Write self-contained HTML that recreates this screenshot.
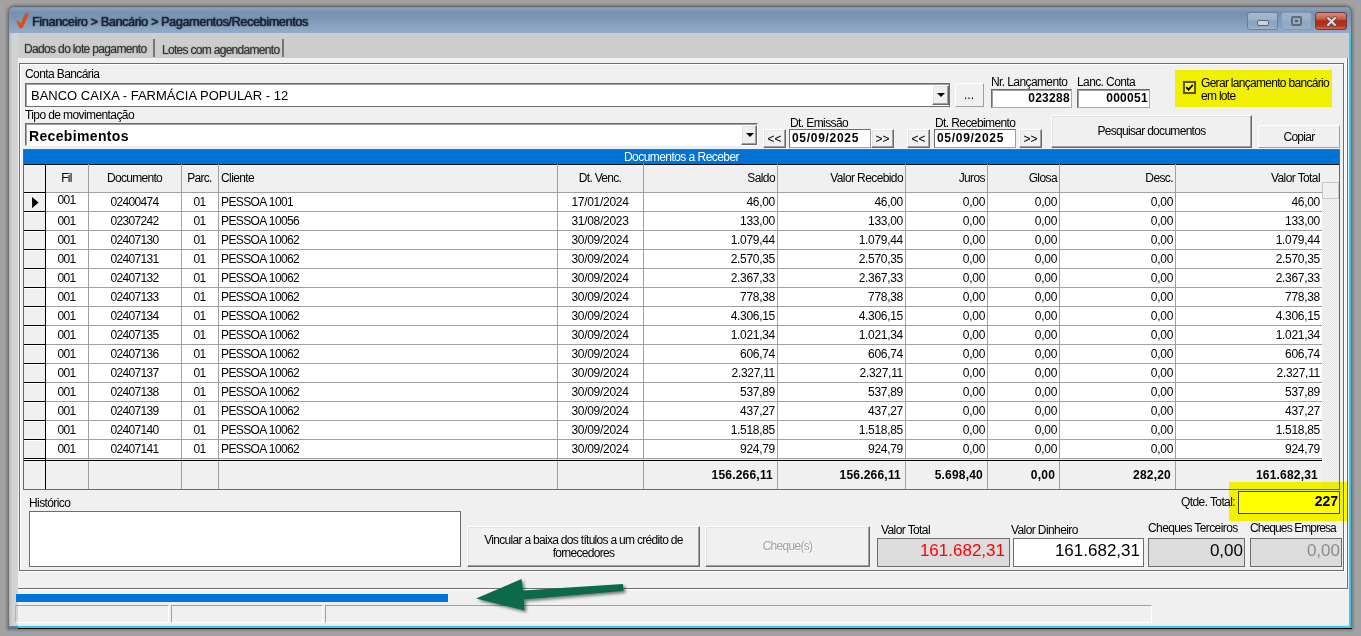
<!DOCTYPE html><html><head><meta charset="utf-8"><style>
*{margin:0;padding:0;box-sizing:border-box}
html,body{width:1361px;height:636px;overflow:hidden;background:#a2a2a2;font-family:"Liberation Sans",sans-serif;font-size:12px;color:#000}
.a{position:absolute}
.t{position:absolute;white-space:nowrap;line-height:14px;letter-spacing:-0.6px}
.c{position:absolute;white-space:nowrap;line-height:14px;letter-spacing:-0.7px;text-align:center}
.r{position:absolute;white-space:nowrap;line-height:14px;letter-spacing:-0.6px;text-align:right}
.b{font-weight:bold}
.sunk{position:absolute;background:#fff;border:1px solid;border-color:#6d6d6d #a9a9a9 #a9a9a9 #6d6d6d;box-shadow:inset 1px 1px 0 #a0a0a0}
.btn{position:absolute;background:#f0f0f0;border:1px solid;border-color:#fff #696969 #696969 #fff;box-shadow:inset -1px -1px 0 #a0a0a0, inset 1px 1px 0 #e3e3e3}
.vl{position:absolute;width:1px;background:#a0a0a0}
.hl{position:absolute;height:1px;background:#a0a0a0}
</style></head><body>
<div class="a" style="left:8px;top:6px;width:1344px;height:623px;border-radius:7px 7px 0 0;background:#707070;box-shadow:0 0 3px 1px rgba(50,50,50,0.45)"></div>
<div class="a" style="left:9px;top:7px;width:1342px;height:621px;border-radius:6px 6px 0 0;background:linear-gradient(90deg,#aab6c2 0,#c3cad1 2px,#d3d3d3 4px,#d3d3d3 1339px,#e6eef2 1339px,#e6eef2 1340px,#40c6ee 1340px,#40c6ee 1342px)"></div>
<div class="a" style="left:9px;top:7px;width:1342px;height:26px;border-radius:6px 6px 0 0;background:linear-gradient(180deg,#7890ad 0,#869fbb 2px,#7690af 5px,#7b96b5 11px,#8aa5c2 20px,#91abc7 26px)"></div>
<svg class="a" style="left:0;top:0" width="40" height="40" viewBox="0 0 40 40"><defs><filter id="ib" x="-50%" y="-50%" width="200%" height="200%"><feGaussianBlur stdDeviation="0.7"/></filter></defs><g filter="url(#ib)"><path d="M16.4 21.0 L17.6 20.6 L20.8 23.6 L25.0 13.6 Q26.9 12.1 29.0 13.9 L22.8 27.6 Q21.0 29.4 19.2 28.0 Z" fill="#d8501f"/><path d="M13.8 17.9 L14.8 17.5 L18.2 21.2 L17.2 23.0 Z" fill="#c87060" opacity="0.55"/></g></svg>
<div class="t" style="left:32px;top:14.5px;font-size:12.6px;letter-spacing:-0.34px;color:#1c2430;text-shadow:0 0 1px rgba(20,30,45,.9),0.5px 0 1px rgba(20,30,45,.6),0 0 2px rgba(40,55,75,.5)">Financeiro &gt; Bancário &gt; Pagamentos/Recebimentos</div>
<div class="a" style="left:1247px;top:12px;width:31px;height:18px;border:1px solid #6580a2;border-radius:3px;background:linear-gradient(180deg,#a6bad0 0,#9cb2ca 40%,#8aa3c0 50%,#8fa8c4 85%,#a2b8cf 100%);filter:blur(0.3px)"><div class="a" style="left:9px;top:7px;width:12px;height:6px;background:#cfd3d8;border:1px solid #55677d;border-radius:2px"></div></div>
<div class="a" style="left:1281px;top:12px;width:31px;height:18px;border:1px solid #849bb7;border-radius:3px;background:linear-gradient(180deg,#9fb4cb 0,#98aec7 45%,#8ea7c2 55%,#97aec7 100%);filter:blur(0.3px)"><div class="a" style="left:9px;top:3px;width:11px;height:10px;border:2px solid #5d6d80;background:#9aa8b8;border-radius:2px"><div class="a" style="left:2px;top:2px;width:3px;height:2px;background:#4d5b6b"></div></div></div>
<div class="a" style="left:1315px;top:12px;width:32px;height:18px;border:1px solid #6e3a3a;border-radius:3px;background:linear-gradient(180deg,#d88a7c 0,#c8604c 35%,#ad2a14 50%,#b7341c 80%,#cf6a58 100%);filter:blur(0.3px)"><svg class="a" style="left:10px;top:3px" width="11" height="11" viewBox="0 0 11 11"><path d="M2 2 L9 9 M9 2 L2 9" stroke="#5a4a4a" stroke-width="3.4" stroke-linecap="round"/><path d="M2 2 L9 9 M9 2 L2 9" stroke="#dcdcdc" stroke-width="2" stroke-linecap="round"/></svg></div>
<div class="a" style="left:18px;top:33px;width:1331px;height:25px;background:#cdcdcd"></div>
<div class="t" style="left:24px;top:42px;color:#333;letter-spacing:-0.65px;font-size:12px;text-shadow:0 0 1px rgba(0,0,0,.35),0 0 2px rgba(0,0,0,.2)">Dados do lote pagamento</div>
<div class="a" style="left:153px;top:39px;width:2px;height:18px;background:#767676;filter:blur(0.4px)"></div>
<div class="t" style="left:162px;top:43px;color:#333;letter-spacing:-0.7px;font-size:12px;text-shadow:0 0 1px rgba(0,0,0,.35),0 0 2px rgba(0,0,0,.2)">Lotes com agendamento</div>
<div class="a" style="left:282px;top:39px;width:2px;height:18px;background:#767676;filter:blur(0.4px)"></div>
<div class="a" style="left:18px;top:58px;width:1329px;height:531px;background:#f0f0f0"></div>
<div class="a" style="left:19px;top:63px;width:1325px;height:508px;border:1px solid;border-color:#6d6d6d #6d6d6d #6d6d6d #6d6d6d;box-shadow:inset 1px 1px 0 #fff, 1px 1px 0 #fff"></div>
<div class="t" style="left:25px;top:67px;">Conta Bancária</div>
<div class="sunk" style="left:25px;top:83px;width:925px;height:24px;border-color:#6d6d6d;box-shadow:inset 1px 1px 0 #a0a0a0"></div>
<div class="t" style="left:31px;top:88px;font-size:13px;letter-spacing:0;line-height:16px">BANCO CAIXA - FARMÁCIA POPULAR - 12</div>
<div class="btn" style="left:932px;top:85px;width:17px;height:20px"><div class="a" style="left:4px;top:7px;width:0;height:0;border-left:4px solid transparent;border-right:4px solid transparent;border-top:4px solid #000"></div></div>
<div class="btn" style="left:955px;top:83px;width:29px;height:24px;border-color:#fff #a0a0a0 #a0a0a0 #fff;box-shadow:none"><div class="t" style="left:8px;top:4px;letter-spacing:0">...</div></div>
<div class="t" style="left:991px;top:75px;">Nr. Lançamento</div>
<div class="sunk" style="left:991px;top:89px;width:81px;height:19px"></div>
<div class="r b" style="left:991px;top:91px;width:79px;font-size:12px;letter-spacing:0.3px">023288</div>
<div class="t" style="left:1077px;top:75px;">Lanc. Conta</div>
<div class="sunk" style="left:1077px;top:89px;width:73px;height:19px"></div>
<div class="r b" style="left:1077px;top:91px;width:71px;font-size:12px;letter-spacing:0.3px">000051</div>
<div class="a" style="left:1183px;top:81px;width:13px;height:13px;border:2px solid #5a5a5a;background:#fff;box-shadow:0 0 0 1px #e8e8e8"><svg class="a" style="left:0;top:0" width="9" height="9" viewBox="0 0 9 9"><path d="M1.2 4.2 L3.5 6.6 L7.8 1.8" fill="none" stroke="#000" stroke-width="1.8"/></svg></div>
<div class="t" style="left:1201px;top:77px;line-height:13px;letter-spacing:-0.7px">Gerar lançamento bancário<br>em lote</div>
<div class="t" style="left:25px;top:108px;">Tipo de movimentação</div>
<div class="sunk" style="left:25px;top:123px;width:733px;height:23px;border-color:#6d6d6d #fff #fff #6d6d6d;box-shadow:inset 1px 1px 0 #a0a0a0"></div>
<div class="t b" style="left:29px;top:128px;font-size:14px;letter-spacing:0.35px;line-height:16px">Recebimentos</div>
<div class="btn" style="left:741px;top:125px;width:16px;height:20px"><div class="a" style="left:4px;top:7px;width:0;height:0;border-left:4px solid transparent;border-right:4px solid transparent;border-top:4px solid #000"></div></div>
<div class="t" style="left:790px;top:116px;">Dt. Emissão</div><div class="btn" style="left:763px;top:129px;width:23px;height:19px"><div class="c" style="left:0;top:2px;width:21px;letter-spacing:0">&lt;&lt;</div></div><div class="sunk" style="left:789px;top:129px;width:82px;height:19px;box-shadow:none;border-color:#6d6d6d #a0a0a0 #a0a0a0 #6d6d6d"></div><div class="t b" style="left:792px;top:131px;letter-spacing:0.7px">05/09/2025</div><div class="btn" style="left:871px;top:129px;width:23px;height:19px"><div class="c" style="left:0;top:2px;width:21px;letter-spacing:0">&gt;&gt;</div></div>
<div class="t" style="left:935px;top:116px;">Dt. Recebimento</div><div class="btn" style="left:907px;top:129px;width:23px;height:19px"><div class="c" style="left:0;top:2px;width:21px;letter-spacing:0">&lt;&lt;</div></div><div class="sunk" style="left:934px;top:129px;width:82px;height:19px;box-shadow:none;border-color:#6d6d6d #a0a0a0 #a0a0a0 #6d6d6d"></div><div class="t b" style="left:937px;top:131px;letter-spacing:0.7px">05/09/2025</div><div class="btn" style="left:1019px;top:129px;width:23px;height:19px"><div class="c" style="left:0;top:2px;width:21px;letter-spacing:0">&gt;&gt;</div></div>
<div class="btn" style="left:1051px;top:115px;width:201px;height:33px"><div class="c" style="left:0;top:8px;width:199px">Pesquisar documentos</div></div>
<div class="btn" style="left:1258px;top:125px;width:82px;height:23px;border-color:#fff #a0a0a0 #a0a0a0 #fff;box-shadow:none"><div class="c" style="left:0;top:4px;width:80px">Copiar</div></div>
<div class="a" style="left:23px;top:149px;width:1317px;height:341px;background:#f0f0f0;border:1px solid #696969"></div>
<div class="a" style="left:24px;top:150px;width:1315px;height:15px;background:#0073d5;border-bottom:1px solid #101010"></div>
<div class="c" style="left:24px;top:151px;width:1315px;color:#fff;line-height:13px;letter-spacing:-0.55px">Documentos a Receber</div>
<div class="a" style="left:45px;top:192px;width:1277px;height:266px;background:#fff"></div>
<div class="a" style="left:1322px;top:198px;width:17px;height:291px;background:repeating-conic-gradient(#f4f4f4 0 25%, #e6e6e6 0 50%) 0 0/2px 2px"></div>
<div class="a" style="left:1322px;top:182px;width:17px;height:17px;background:#f0f0f0;border:1px solid #c8c8c8"></div>
<div class="vl" style="left:45px;top:164px;height:325px;background:#000"></div>
<div class="vl" style="left:88px;top:164px;height:325px"></div>
<div class="vl" style="left:181px;top:164px;height:325px"></div>
<div class="vl" style="left:218px;top:164px;height:325px"></div>
<div class="vl" style="left:557px;top:164px;height:325px"></div>
<div class="vl" style="left:643px;top:164px;height:325px"></div>
<div class="vl" style="left:777px;top:164px;height:325px"></div>
<div class="vl" style="left:905px;top:164px;height:325px"></div>
<div class="vl" style="left:987px;top:164px;height:325px"></div>
<div class="vl" style="left:1059px;top:164px;height:325px"></div>
<div class="vl" style="left:1175px;top:164px;height:325px"></div>
<div class="hl" style="left:46px;top:192px;width:1276px"></div>
<div class="a" style="left:24px;top:192px;width:21px;height:1px;background:#000"></div>
<div class="a" style="left:24px;top:193px;width:21px;height:1px;background:#fff"></div>
<div class="hl" style="left:46px;top:211px;width:1276px"></div>
<div class="a" style="left:24px;top:211px;width:21px;height:1px;background:#000"></div>
<div class="a" style="left:24px;top:212px;width:21px;height:1px;background:#fff"></div>
<div class="hl" style="left:46px;top:230px;width:1276px"></div>
<div class="a" style="left:24px;top:230px;width:21px;height:1px;background:#000"></div>
<div class="a" style="left:24px;top:231px;width:21px;height:1px;background:#fff"></div>
<div class="hl" style="left:46px;top:249px;width:1276px"></div>
<div class="a" style="left:24px;top:249px;width:21px;height:1px;background:#000"></div>
<div class="a" style="left:24px;top:250px;width:21px;height:1px;background:#fff"></div>
<div class="hl" style="left:46px;top:268px;width:1276px"></div>
<div class="a" style="left:24px;top:268px;width:21px;height:1px;background:#000"></div>
<div class="a" style="left:24px;top:269px;width:21px;height:1px;background:#fff"></div>
<div class="hl" style="left:46px;top:287px;width:1276px"></div>
<div class="a" style="left:24px;top:287px;width:21px;height:1px;background:#000"></div>
<div class="a" style="left:24px;top:288px;width:21px;height:1px;background:#fff"></div>
<div class="hl" style="left:46px;top:306px;width:1276px"></div>
<div class="a" style="left:24px;top:306px;width:21px;height:1px;background:#000"></div>
<div class="a" style="left:24px;top:307px;width:21px;height:1px;background:#fff"></div>
<div class="hl" style="left:46px;top:325px;width:1276px"></div>
<div class="a" style="left:24px;top:325px;width:21px;height:1px;background:#000"></div>
<div class="a" style="left:24px;top:326px;width:21px;height:1px;background:#fff"></div>
<div class="hl" style="left:46px;top:344px;width:1276px"></div>
<div class="a" style="left:24px;top:344px;width:21px;height:1px;background:#000"></div>
<div class="a" style="left:24px;top:345px;width:21px;height:1px;background:#fff"></div>
<div class="hl" style="left:46px;top:363px;width:1276px"></div>
<div class="a" style="left:24px;top:363px;width:21px;height:1px;background:#000"></div>
<div class="a" style="left:24px;top:364px;width:21px;height:1px;background:#fff"></div>
<div class="hl" style="left:46px;top:382px;width:1276px"></div>
<div class="a" style="left:24px;top:382px;width:21px;height:1px;background:#000"></div>
<div class="a" style="left:24px;top:383px;width:21px;height:1px;background:#fff"></div>
<div class="hl" style="left:46px;top:401px;width:1276px"></div>
<div class="a" style="left:24px;top:401px;width:21px;height:1px;background:#000"></div>
<div class="a" style="left:24px;top:402px;width:21px;height:1px;background:#fff"></div>
<div class="hl" style="left:46px;top:420px;width:1276px"></div>
<div class="a" style="left:24px;top:420px;width:21px;height:1px;background:#000"></div>
<div class="a" style="left:24px;top:421px;width:21px;height:1px;background:#fff"></div>
<div class="hl" style="left:46px;top:439px;width:1276px"></div>
<div class="a" style="left:24px;top:439px;width:21px;height:1px;background:#000"></div>
<div class="a" style="left:24px;top:440px;width:21px;height:1px;background:#fff"></div>
<div class="a" style="left:24px;top:458px;width:21px;height:1px;background:#000"></div>
<div class="a" style="left:24px;top:459px;width:21px;height:1px;background:#fff"></div>
<div class="a" style="left:24px;top:211px;width:21px;height:1px;background:#000"></div>
<div class="hl" style="left:46px;top:458px;width:1276px"></div>
<div class="a" style="left:24px;top:460px;width:1298px;height:1px;background:#000"></div>
<div class="c" style="left:45px;top:171px;width:43px">Fil</div>
<div class="c" style="left:88px;top:171px;width:93px">Documento</div>
<div class="c" style="left:181px;top:171px;width:37px">Parc.</div>
<div class="t" style="left:221px;top:171px;">Cliente</div>
<div class="c" style="left:557px;top:171px;width:86px">Dt. Venc.</div>
<div class="r" style="left:643px;top:171px;width:132px">Saldo</div>
<div class="r" style="left:777px;top:171px;width:126px">Valor Recebido</div>
<div class="r" style="left:905px;top:171px;width:80px">Juros</div>
<div class="r" style="left:987px;top:171px;width:70px">Glosa</div>
<div class="r" style="left:1059px;top:171px;width:114px">Desc.</div>
<div class="r" style="left:1175px;top:171px;width:145px">Valor Total</div>
<svg class="a" style="left:0;top:0" width="45" height="215"><path d="M32 197 L38.6 202.6 L32 208.2 Z" fill="#000"/></svg>
<div class="c" style="left:45px;top:193px;width:43px">001</div>
<div class="c" style="left:88px;top:195px;width:93px">02400474</div>
<div class="c" style="left:181px;top:195px;width:37px">01</div>
<div class="t" style="left:221px;top:195px;">PESSOA 1001</div>
<div class="c" style="left:557px;top:195px;width:86px;letter-spacing:-0.3px">17/01/2024</div>
<div class="r" style="left:643px;top:195px;width:132px;letter-spacing:-0.3px">46,00</div>
<div class="r" style="left:777px;top:195px;width:126px;letter-spacing:-0.3px">46,00</div>
<div class="r" style="left:905px;top:195px;width:80px;letter-spacing:-0.3px">0,00</div>
<div class="r" style="left:987px;top:195px;width:70px;letter-spacing:-0.3px">0,00</div>
<div class="r" style="left:1059px;top:195px;width:114px;letter-spacing:-0.3px">0,00</div>
<div class="r" style="left:1175px;top:195px;width:145px;letter-spacing:-0.3px">46,00</div>
<div class="c" style="left:45px;top:214px;width:43px">001</div>
<div class="c" style="left:88px;top:214px;width:93px">02307242</div>
<div class="c" style="left:181px;top:214px;width:37px">01</div>
<div class="t" style="left:221px;top:214px;">PESSOA 10056</div>
<div class="c" style="left:557px;top:214px;width:86px;letter-spacing:-0.3px">31/08/2023</div>
<div class="r" style="left:643px;top:214px;width:132px;letter-spacing:-0.3px">133,00</div>
<div class="r" style="left:777px;top:214px;width:126px;letter-spacing:-0.3px">133,00</div>
<div class="r" style="left:905px;top:214px;width:80px;letter-spacing:-0.3px">0,00</div>
<div class="r" style="left:987px;top:214px;width:70px;letter-spacing:-0.3px">0,00</div>
<div class="r" style="left:1059px;top:214px;width:114px;letter-spacing:-0.3px">0,00</div>
<div class="r" style="left:1175px;top:214px;width:145px;letter-spacing:-0.3px">133,00</div>
<div class="c" style="left:45px;top:233px;width:43px">001</div>
<div class="c" style="left:88px;top:233px;width:93px">02407130</div>
<div class="c" style="left:181px;top:233px;width:37px">01</div>
<div class="t" style="left:221px;top:233px;">PESSOA 10062</div>
<div class="c" style="left:557px;top:233px;width:86px;letter-spacing:-0.3px">30/09/2024</div>
<div class="r" style="left:643px;top:233px;width:132px;letter-spacing:-0.3px">1.079,44</div>
<div class="r" style="left:777px;top:233px;width:126px;letter-spacing:-0.3px">1.079,44</div>
<div class="r" style="left:905px;top:233px;width:80px;letter-spacing:-0.3px">0,00</div>
<div class="r" style="left:987px;top:233px;width:70px;letter-spacing:-0.3px">0,00</div>
<div class="r" style="left:1059px;top:233px;width:114px;letter-spacing:-0.3px">0,00</div>
<div class="r" style="left:1175px;top:233px;width:145px;letter-spacing:-0.3px">1.079,44</div>
<div class="c" style="left:45px;top:252px;width:43px">001</div>
<div class="c" style="left:88px;top:252px;width:93px">02407131</div>
<div class="c" style="left:181px;top:252px;width:37px">01</div>
<div class="t" style="left:221px;top:252px;">PESSOA 10062</div>
<div class="c" style="left:557px;top:252px;width:86px;letter-spacing:-0.3px">30/09/2024</div>
<div class="r" style="left:643px;top:252px;width:132px;letter-spacing:-0.3px">2.570,35</div>
<div class="r" style="left:777px;top:252px;width:126px;letter-spacing:-0.3px">2.570,35</div>
<div class="r" style="left:905px;top:252px;width:80px;letter-spacing:-0.3px">0,00</div>
<div class="r" style="left:987px;top:252px;width:70px;letter-spacing:-0.3px">0,00</div>
<div class="r" style="left:1059px;top:252px;width:114px;letter-spacing:-0.3px">0,00</div>
<div class="r" style="left:1175px;top:252px;width:145px;letter-spacing:-0.3px">2.570,35</div>
<div class="c" style="left:45px;top:271px;width:43px">001</div>
<div class="c" style="left:88px;top:271px;width:93px">02407132</div>
<div class="c" style="left:181px;top:271px;width:37px">01</div>
<div class="t" style="left:221px;top:271px;">PESSOA 10062</div>
<div class="c" style="left:557px;top:271px;width:86px;letter-spacing:-0.3px">30/09/2024</div>
<div class="r" style="left:643px;top:271px;width:132px;letter-spacing:-0.3px">2.367,33</div>
<div class="r" style="left:777px;top:271px;width:126px;letter-spacing:-0.3px">2.367,33</div>
<div class="r" style="left:905px;top:271px;width:80px;letter-spacing:-0.3px">0,00</div>
<div class="r" style="left:987px;top:271px;width:70px;letter-spacing:-0.3px">0,00</div>
<div class="r" style="left:1059px;top:271px;width:114px;letter-spacing:-0.3px">0,00</div>
<div class="r" style="left:1175px;top:271px;width:145px;letter-spacing:-0.3px">2.367,33</div>
<div class="c" style="left:45px;top:290px;width:43px">001</div>
<div class="c" style="left:88px;top:290px;width:93px">02407133</div>
<div class="c" style="left:181px;top:290px;width:37px">01</div>
<div class="t" style="left:221px;top:290px;">PESSOA 10062</div>
<div class="c" style="left:557px;top:290px;width:86px;letter-spacing:-0.3px">30/09/2024</div>
<div class="r" style="left:643px;top:290px;width:132px;letter-spacing:-0.3px">778,38</div>
<div class="r" style="left:777px;top:290px;width:126px;letter-spacing:-0.3px">778,38</div>
<div class="r" style="left:905px;top:290px;width:80px;letter-spacing:-0.3px">0,00</div>
<div class="r" style="left:987px;top:290px;width:70px;letter-spacing:-0.3px">0,00</div>
<div class="r" style="left:1059px;top:290px;width:114px;letter-spacing:-0.3px">0,00</div>
<div class="r" style="left:1175px;top:290px;width:145px;letter-spacing:-0.3px">778,38</div>
<div class="c" style="left:45px;top:309px;width:43px">001</div>
<div class="c" style="left:88px;top:309px;width:93px">02407134</div>
<div class="c" style="left:181px;top:309px;width:37px">01</div>
<div class="t" style="left:221px;top:309px;">PESSOA 10062</div>
<div class="c" style="left:557px;top:309px;width:86px;letter-spacing:-0.3px">30/09/2024</div>
<div class="r" style="left:643px;top:309px;width:132px;letter-spacing:-0.3px">4.306,15</div>
<div class="r" style="left:777px;top:309px;width:126px;letter-spacing:-0.3px">4.306,15</div>
<div class="r" style="left:905px;top:309px;width:80px;letter-spacing:-0.3px">0,00</div>
<div class="r" style="left:987px;top:309px;width:70px;letter-spacing:-0.3px">0,00</div>
<div class="r" style="left:1059px;top:309px;width:114px;letter-spacing:-0.3px">0,00</div>
<div class="r" style="left:1175px;top:309px;width:145px;letter-spacing:-0.3px">4.306,15</div>
<div class="c" style="left:45px;top:328px;width:43px">001</div>
<div class="c" style="left:88px;top:328px;width:93px">02407135</div>
<div class="c" style="left:181px;top:328px;width:37px">01</div>
<div class="t" style="left:221px;top:328px;">PESSOA 10062</div>
<div class="c" style="left:557px;top:328px;width:86px;letter-spacing:-0.3px">30/09/2024</div>
<div class="r" style="left:643px;top:328px;width:132px;letter-spacing:-0.3px">1.021,34</div>
<div class="r" style="left:777px;top:328px;width:126px;letter-spacing:-0.3px">1.021,34</div>
<div class="r" style="left:905px;top:328px;width:80px;letter-spacing:-0.3px">0,00</div>
<div class="r" style="left:987px;top:328px;width:70px;letter-spacing:-0.3px">0,00</div>
<div class="r" style="left:1059px;top:328px;width:114px;letter-spacing:-0.3px">0,00</div>
<div class="r" style="left:1175px;top:328px;width:145px;letter-spacing:-0.3px">1.021,34</div>
<div class="c" style="left:45px;top:347px;width:43px">001</div>
<div class="c" style="left:88px;top:347px;width:93px">02407136</div>
<div class="c" style="left:181px;top:347px;width:37px">01</div>
<div class="t" style="left:221px;top:347px;">PESSOA 10062</div>
<div class="c" style="left:557px;top:347px;width:86px;letter-spacing:-0.3px">30/09/2024</div>
<div class="r" style="left:643px;top:347px;width:132px;letter-spacing:-0.3px">606,74</div>
<div class="r" style="left:777px;top:347px;width:126px;letter-spacing:-0.3px">606,74</div>
<div class="r" style="left:905px;top:347px;width:80px;letter-spacing:-0.3px">0,00</div>
<div class="r" style="left:987px;top:347px;width:70px;letter-spacing:-0.3px">0,00</div>
<div class="r" style="left:1059px;top:347px;width:114px;letter-spacing:-0.3px">0,00</div>
<div class="r" style="left:1175px;top:347px;width:145px;letter-spacing:-0.3px">606,74</div>
<div class="c" style="left:45px;top:366px;width:43px">001</div>
<div class="c" style="left:88px;top:366px;width:93px">02407137</div>
<div class="c" style="left:181px;top:366px;width:37px">01</div>
<div class="t" style="left:221px;top:366px;">PESSOA 10062</div>
<div class="c" style="left:557px;top:366px;width:86px;letter-spacing:-0.3px">30/09/2024</div>
<div class="r" style="left:643px;top:366px;width:132px;letter-spacing:-0.3px">2.327,11</div>
<div class="r" style="left:777px;top:366px;width:126px;letter-spacing:-0.3px">2.327,11</div>
<div class="r" style="left:905px;top:366px;width:80px;letter-spacing:-0.3px">0,00</div>
<div class="r" style="left:987px;top:366px;width:70px;letter-spacing:-0.3px">0,00</div>
<div class="r" style="left:1059px;top:366px;width:114px;letter-spacing:-0.3px">0,00</div>
<div class="r" style="left:1175px;top:366px;width:145px;letter-spacing:-0.3px">2.327,11</div>
<div class="c" style="left:45px;top:385px;width:43px">001</div>
<div class="c" style="left:88px;top:385px;width:93px">02407138</div>
<div class="c" style="left:181px;top:385px;width:37px">01</div>
<div class="t" style="left:221px;top:385px;">PESSOA 10062</div>
<div class="c" style="left:557px;top:385px;width:86px;letter-spacing:-0.3px">30/09/2024</div>
<div class="r" style="left:643px;top:385px;width:132px;letter-spacing:-0.3px">537,89</div>
<div class="r" style="left:777px;top:385px;width:126px;letter-spacing:-0.3px">537,89</div>
<div class="r" style="left:905px;top:385px;width:80px;letter-spacing:-0.3px">0,00</div>
<div class="r" style="left:987px;top:385px;width:70px;letter-spacing:-0.3px">0,00</div>
<div class="r" style="left:1059px;top:385px;width:114px;letter-spacing:-0.3px">0,00</div>
<div class="r" style="left:1175px;top:385px;width:145px;letter-spacing:-0.3px">537,89</div>
<div class="c" style="left:45px;top:404px;width:43px">001</div>
<div class="c" style="left:88px;top:404px;width:93px">02407139</div>
<div class="c" style="left:181px;top:404px;width:37px">01</div>
<div class="t" style="left:221px;top:404px;">PESSOA 10062</div>
<div class="c" style="left:557px;top:404px;width:86px;letter-spacing:-0.3px">30/09/2024</div>
<div class="r" style="left:643px;top:404px;width:132px;letter-spacing:-0.3px">437,27</div>
<div class="r" style="left:777px;top:404px;width:126px;letter-spacing:-0.3px">437,27</div>
<div class="r" style="left:905px;top:404px;width:80px;letter-spacing:-0.3px">0,00</div>
<div class="r" style="left:987px;top:404px;width:70px;letter-spacing:-0.3px">0,00</div>
<div class="r" style="left:1059px;top:404px;width:114px;letter-spacing:-0.3px">0,00</div>
<div class="r" style="left:1175px;top:404px;width:145px;letter-spacing:-0.3px">437,27</div>
<div class="c" style="left:45px;top:423px;width:43px">001</div>
<div class="c" style="left:88px;top:423px;width:93px">02407140</div>
<div class="c" style="left:181px;top:423px;width:37px">01</div>
<div class="t" style="left:221px;top:423px;">PESSOA 10062</div>
<div class="c" style="left:557px;top:423px;width:86px;letter-spacing:-0.3px">30/09/2024</div>
<div class="r" style="left:643px;top:423px;width:132px;letter-spacing:-0.3px">1.518,85</div>
<div class="r" style="left:777px;top:423px;width:126px;letter-spacing:-0.3px">1.518,85</div>
<div class="r" style="left:905px;top:423px;width:80px;letter-spacing:-0.3px">0,00</div>
<div class="r" style="left:987px;top:423px;width:70px;letter-spacing:-0.3px">0,00</div>
<div class="r" style="left:1059px;top:423px;width:114px;letter-spacing:-0.3px">0,00</div>
<div class="r" style="left:1175px;top:423px;width:145px;letter-spacing:-0.3px">1.518,85</div>
<div class="c" style="left:45px;top:442px;width:43px">001</div>
<div class="c" style="left:88px;top:442px;width:93px">02407141</div>
<div class="c" style="left:181px;top:442px;width:37px">01</div>
<div class="t" style="left:221px;top:442px;">PESSOA 10062</div>
<div class="c" style="left:557px;top:442px;width:86px;letter-spacing:-0.3px">30/09/2024</div>
<div class="r" style="left:643px;top:442px;width:132px;letter-spacing:-0.3px">924,79</div>
<div class="r" style="left:777px;top:442px;width:126px;letter-spacing:-0.3px">924,79</div>
<div class="r" style="left:905px;top:442px;width:80px;letter-spacing:-0.3px">0,00</div>
<div class="r" style="left:987px;top:442px;width:70px;letter-spacing:-0.3px">0,00</div>
<div class="r" style="left:1059px;top:442px;width:114px;letter-spacing:-0.3px">0,00</div>
<div class="r" style="left:1175px;top:442px;width:145px;letter-spacing:-0.3px">924,79</div>
<div class="r b" style="left:643px;top:468px;width:130px;letter-spacing:0.2px">156.266,11</div>
<div class="r b" style="left:777px;top:468px;width:124px;letter-spacing:0.2px">156.266,11</div>
<div class="r b" style="left:905px;top:468px;width:78px;letter-spacing:0.2px">5.698,40</div>
<div class="r b" style="left:987px;top:468px;width:68px;letter-spacing:0.2px">0,00</div>
<div class="r b" style="left:1059px;top:468px;width:112px;letter-spacing:0.2px">282,20</div>
<div class="r b" style="left:1175px;top:468px;width:143px;letter-spacing:0.2px">161.682,31</div>
<div class="t" style="left:29px;top:496px;">Histórico</div>
<div class="a" style="left:29px;top:511px;width:432px;height:56px;background:#fff;border:1px solid #6d6d6d"></div>
<div class="btn" style="left:467px;top:526px;width:233px;height:41px"><div class="c" style="left:0;top:7px;width:231px;line-height:12.5px">Vincular a baixa dos títulos a um crédito de<br>fornecedores</div></div>
<div class="btn" style="left:705px;top:526px;width:165px;height:41px"><div class="c" style="left:0;top:12px;width:163px;color:#a0a0a0;text-shadow:1px 1px 0 #fff">Cheque(s)</div></div>
<div class="t" style="left:881px;top:523px;">Valor Total</div>
<div class="a" style="left:877px;top:538px;width:133px;height:29px;background:#dcdcdc;border:1px solid #6d6d6d"></div>
<div class="r" style="left:877px;top:541px;width:128px;font-size:17px;line-height:20px;letter-spacing:0;color:#f00">161.682,31</div>
<div class="t" style="left:1011px;top:523px;">Valor Dinheiro</div>
<div class="a" style="left:1013px;top:538px;width:131px;height:29px;background:#fff;border:1px solid #6d6d6d"></div>
<div class="r" style="left:1013px;top:541px;width:127px;font-size:17px;line-height:20px;letter-spacing:0">161.682,31</div>
<div class="t" style="left:1148px;top:521px;">Cheques Terceiros</div>
<div class="a" style="left:1148px;top:538px;width:97px;height:29px;background:#dcdcdc;border:1px solid #6d6d6d"></div>
<div class="r" style="left:1148px;top:541px;width:95px;font-size:17px;line-height:20px;letter-spacing:0">0,00</div>
<div class="t" style="left:1250px;top:521px;letter-spacing:-0.9px">Cheques Empresa</div>
<div class="a" style="left:1250px;top:538px;width:92px;height:29px;background:#dcdcdc;border:1px solid #6d6d6d"></div>
<div class="r" style="left:1250px;top:541px;width:90px;font-size:17px;line-height:20px;letter-spacing:0;color:#8c8c8c">0,00</div>
<div class="r" style="left:1100px;top:495px;width:135px">Qtde. Total:</div>
<div class="a" style="left:1238px;top:491px;width:102px;height:23px;border:1px solid #454545;background:#fff"></div>
<div class="r b" style="left:1238px;top:493px;width:100px;font-size:14px;line-height:16px;letter-spacing:0">227</div>
<div class="a" style="left:18px;top:589px;width:1331px;height:37px;background:#f0f0f0"></div>
<div class="a" style="left:1347px;top:58px;width:1px;height:531px;background:#6d6d6d"></div>
<div class="a" style="left:1346px;top:58px;width:1px;height:531px;background:#fff"></div>
<div class="a" style="left:18px;top:588px;width:1330px;height:1px;background:#6d6d6d"></div>
<div class="a" style="left:18px;top:589px;width:1330px;height:1px;background:#fff"></div>
<div class="a" style="left:16px;top:594px;width:432px;height:8px;background:#0074d9"></div>
<div class="a" style="left:15px;top:605px;width:154px;height:18px;border:1px solid;border-color:#a0a0a0 #fff #fff #b4b4b4"></div>
<div class="a" style="left:171px;top:605px;width:152px;height:18px;border:1px solid;border-color:#a0a0a0 #fff #fff #a0a0a0"></div>
<div class="a" style="left:325px;top:605px;width:827px;height:18px;border:1px solid;border-color:#a0a0a0 #fff #fff #a0a0a0"></div>
<div class="a" style="left:18px;top:625px;width:1331px;height:1px;background:#e4e4ee"></div>
<div class="a" style="left:9px;top:626px;width:1343px;height:2px;background:linear-gradient(90deg,#4a8a98 0,#4a8a98 9px,#3ccaf0 9px,#3ccaf0 1340px,#3aa0c0 1343px)"></div>
<div class="a" style="left:18px;top:628px;width:1334px;height:1px;background:#000"></div>
<svg class="a" style="left:470px;top:574px" width="165" height="45" viewBox="0 0 165 45"><defs><filter id="sh" x="-10%" y="-20%" width="130%" height="150%"><feGaussianBlur in="SourceAlpha" stdDeviation="1.5"/><feOffset dx="2" dy="2"/><feComponentTransfer><feFuncA type="linear" slope="0.5"/></feComponentTransfer><feMerge><feMergeNode/><feMergeNode in="SourceGraphic"/></feMerge></filter></defs><path d="M6 24.5 L51.5 5 L53 16.5 L153 10 L153.5 17 L54 25.5 L54.5 36.5 Z" fill="#0b6a48" filter="url(#sh)"/></svg>
<div class="a" style="left:1175px;top:70px;width:157px;height:37px;background:#ffff00;mix-blend-mode:multiply"></div>
<div class="a" style="left:1229px;top:482px;width:119px;height:39px;background:#ffff00;mix-blend-mode:multiply"></div>
</body></html>
